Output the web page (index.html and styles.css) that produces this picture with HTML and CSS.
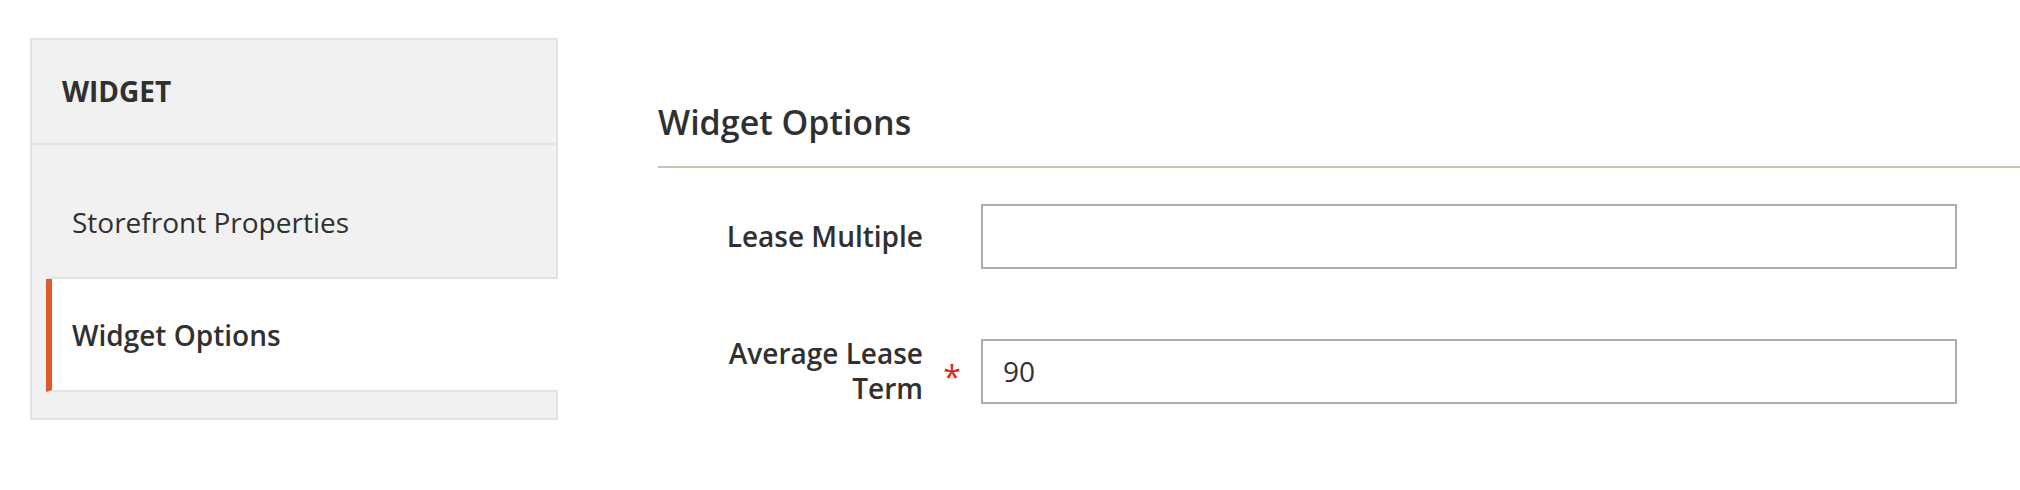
FILE: index.html
```html
<!DOCTYPE html>
<html>
<head>
<meta charset="utf-8">
<link rel="stylesheet" href="styles.css">
</head>
<body>
<div class="page">
  <aside class="nav">
    <div class="nav-title">WIDGET</div>
    <ul class="nav-items">
      <li class="nav-item">Storefront Properties</li>
      <li class="nav-item active">Widget Options</li>
    </ul>
  </aside>
  <main class="main">
    <h2 class="section-title">Widget Options</h2>
    <div class="fieldset">
      <div class="field">
        <label class="field-label">Lease Multiple</label>
        <span class="field-req"></span>
        <div class="field-control"><div class="input"></div></div>
      </div>
      <div class="field">
        <label class="field-label">Average Lease Term</label>
        <span class="field-req">*</span>
        <div class="field-control"><div class="input">90</div></div>
      </div>
    </div>
  </main>
</div>
</body>
</html>
```
FILE: styles.css
```css
html, body {
  margin: 0;
  padding: 0;
  background: #ffffff;
}
body {
  font-family: "Open Sans", "Liberation Sans", sans-serif;
  color: #303030;
  width: 2020px;
  height: 490px;
  overflow: hidden;
}
.page {
  display: flex;
  align-items: flex-start;
  padding: 38px 0 0 30px;
}
.nav {
  width: 528px;
  box-sizing: border-box;
  flex: none;
  background: #f1f1f1;
  border: 2px solid #e3e3e3;
}
.nav-title {
  font-size: 28px;
  font-weight: 700;
  line-height: 29px;
  padding: 37px 0 37px 30px;
  border-bottom: 2px solid #e3e3e3;
}
.nav-items {
  list-style: none;
  margin: 0;
  padding: 23px 0 26px 14px;
}
.nav-item {
  font-size: 28px;
  font-weight: 400;
  line-height: 29px;
  padding: 40px 0 40px 20px;
  border-left: 6px solid transparent;
  border-bottom: 2px solid #e3e3e3;
}
.nav-item.active {
  background: #ffffff;
  font-weight: 600;
  border-left-color: #e0582b;
  margin-right: -2px;
  padding-top: 42px;
}
.main {
  flex: 1;
  margin-left: 100px;
  margin-top: 64px;
}
.section-title {
  margin: 0;
  font-size: 34px;
  font-weight: 600;
  line-height: 40px;
  padding-bottom: 24px;
  border-bottom: 2px solid #cac3b4;
  color: #303030;
}
.fieldset {
  display: flex;
  flex-direction: column;
  gap: 67px;
  margin-top: 36px;
}
.field {
  display: grid;
  grid-template-columns: 265px 58px 976px;
  align-items: center;
}
.field-label {
  font-size: 28px;
  font-weight: 600;
  line-height: 35px;
  text-align: right;
  padding-left: 43px;
}
.field-req {
  color: #e22626;
  font-size: 32px;
  font-weight: 400;
  text-align: center;
  line-height: 1;
  padding-top: 12px;
}
.input {
  box-sizing: border-box;
  height: 65px;
  border: 2px solid #adadad;
  background: #ffffff;
  font-size: 28px;
  line-height: 61px;
  padding-left: 20px;
  color: #303030;
}
```
